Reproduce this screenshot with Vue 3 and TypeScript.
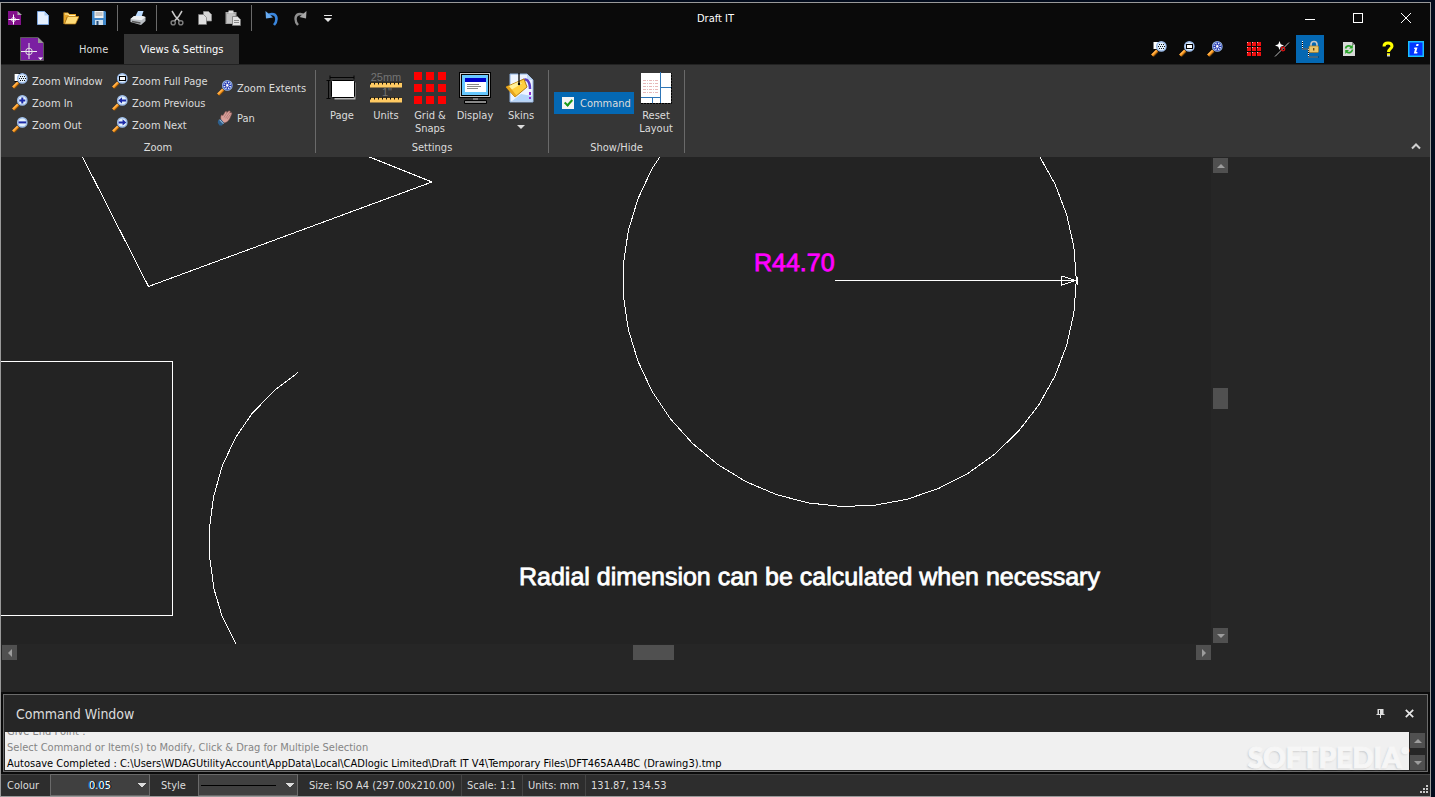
<script setup lang="ts">
import { ref } from 'vue'

interface Tool { icon: string; label: string }
interface BigTool { icon: string; lines: string[]; menu?: boolean }

const quickAccess: Tool[][] = [
  [
    { icon: 'app', label: 'Draft IT' },
    { icon: 'new', label: 'New' },
    { icon: 'open', label: 'Open' },
    { icon: 'save', label: 'Save' },
  ],
  [{ icon: 'print', label: 'Print' }],
  [
    { icon: 'cut', label: 'Cut' },
    { icon: 'copy', label: 'Copy' },
    { icon: 'paste', label: 'Paste' },
  ],
  [
    { icon: 'undo', label: 'Undo' },
    { icon: 'redo', label: 'Redo' },
    { icon: 'more', label: 'Customise' },
  ],
]

const zoomColumns: Tool[][] = [
  [
    { icon: 'zoom-window', label: 'Zoom Window' },
    { icon: 'zoom-in', label: 'Zoom In' },
    { icon: 'zoom-out', label: 'Zoom Out' },
  ],
  [
    { icon: 'zoom-page', label: 'Zoom Full Page' },
    { icon: 'zoom-prev', label: 'Zoom Previous' },
    { icon: 'zoom-next', label: 'Zoom Next' },
  ],
  [
    { icon: 'zoom-extents', label: 'Zoom Extents' },
    { icon: 'pan', label: 'Pan' },
  ],
]

const settings: BigTool[] = [
  { icon: 'page', lines: ['Page'] },
  { icon: 'units', lines: ['Units'] },
  { icon: 'grid', lines: ['Grid &', 'Snaps'] },
  { icon: 'display', lines: ['Display'] },
  { icon: 'skins', lines: ['Skins'], menu: true },
]

const shortcuts: Tool[][] = [
  [
    { icon: 'zoom-window', label: 'Zoom Window' },
    { icon: 'zoom-page', label: 'Zoom Full Page' },
    { icon: 'zoom-extents', label: 'Zoom Extents' },
  ],
  [
    { icon: 'grid-small', label: 'Grid' },
    { icon: 'snap', label: 'Snap' },
    { icon: 'ortho', label: 'Ortho lock' },
  ],
  [{ icon: 'refresh', label: 'Refresh' }],
  [
    { icon: 'help', label: 'Help' },
    { icon: 'info', label: 'About' },
  ],
]

const commandShown = ref(true)

const log = [
  { text: 'Give End Point :', current: false },
  { text: 'Select Command or Item(s) to Modify, Click & Drag for Multiple Selection', current: false },
  {
    text: 'Autosave Completed : C:\\Users\\WDAGUtilityAccount\\AppData\\Local\\CADlogic Limited\\Draft IT V4\\Temporary Files\\DFT465AA4BC (Drawing3).tmp',
    current: true,
  },
]

const facts = ['Size: ISO A4 (297.00x210.00)', 'Scale: 1:1', 'Units: mm', '131.87, 134.53']

// The drawing engine shows circles as short chords.
function chords(cx: number, cy: number, r: number, count: number): string {
  return Array.from({ length: count }, (_, i) => {
    const a = (2 * Math.PI * i) / count
    return `${(cx + r * Math.cos(a)).toFixed(1)},${(cy + r * Math.sin(a)).toFixed(1)}`
  }).join(' ')
}
const circle = chords(848.6, 123, 226.7, 43)
</script>

<template>
  <svg class="defs" aria-hidden="true">
    <defs>
      <g id="lens">
        <path d="M1.5 14.8 6.4 9.9" stroke="#7a4a10" stroke-width="3.4" />
        <path d="M1 14.4 6 9.4" stroke="#ff9a1e" stroke-width="2.4" />
        <path d="M1 13.6 5.4 9.2" stroke="#ffd08a" stroke-width="0.8" />
        <circle cx="10.3" cy="5.4" r="4.6" fill="#e2f0fc" stroke="#9dbce8" stroke-width="1.5" />
      </g>
      <symbol id="i-zoom-window" viewBox="0 0 16 16">
        <path d="M2.5 1v7.5H7V.5h6" fill="#fff" stroke="#000" stroke-width="1" />
        <rect x="2.5" y="1" width="8" height="7" fill="#fff" />
        <use href="#lens" />
        <path d="M8 3.5h6M7 5.5h7M8 7.5h6" stroke="#111" stroke-dasharray="1 1" />
      </symbol>
      <symbol id="i-zoom-in" viewBox="0 0 16 16"><use href="#lens" /><path d="M7.3 5.4h6M10.3 2.4v6" stroke="#1c2aa8" stroke-width="2" /></symbol>
      <symbol id="i-zoom-out" viewBox="0 0 16 16"><use href="#lens" /><path d="M6.500 5.400h7.600" stroke="#1c2aa8" stroke-width="2" /></symbol>
      <symbol id="i-zoom-page" viewBox="0 0 16 16"><use href="#lens" /><rect x="7.500" y="3.500" width="6" height="4" fill="#fff" stroke="#000" /></symbol>
      <symbol id="i-zoom-prev" viewBox="0 0 16 16"><use href="#lens" /><path d="M6.300 5.400 10 2.200v2.200h4v2h-4v2.200z" fill="#1c2aa8" /></symbol>
      <symbol id="i-zoom-next" viewBox="0 0 16 16"><use href="#lens" /><path d="M14.300 5.400 10.600 2.200v2.200h-4v2h4v2.200z" fill="#1c2aa8" /></symbol>
      <symbol id="i-zoom-extents" viewBox="0 0 16 16">
        <use href="#lens" />
        <path d="M7.500 2.700 13.100 8.100M13.100 2.700 7.500 8.100M10.300 1v8.800M6 5.400h8.600" stroke="#2636b0" stroke-width="1.300" />
        <circle cx="10.300" cy="5.400" r="1.300" fill="#fff" />
        <circle cx="10.300" cy="5.400" r="4.300" fill="none" stroke="#4a5fc4" stroke-width=".8" />
      </symbol>
      <symbol id="i-pan" viewBox="0 0 16 16">
        <path d="M4 9.500C3.500 7 4 5 5 4.800l.8 1L8.500 1.500l1.500.2-.3 1L12 .8l1.300.5-.6 1.700 1.600-.4.5 1.200-2.200 5C11.500 11 9 13 6.500 13z" fill="#d9a09a" stroke="#8c5954" stroke-width=".5" />
        <path d="M7 7.500 10 2.500M8.600 8.300l3.800-5.600M10 9l3.600-4.800" stroke="#a06a66" stroke-width=".6" />
        <path d="M1 10.500 3.500 9 7 12.800 5 15.500H2.500L.8 13z" fill="#2d5f8c" /><path d="M2.500 9.700 6.400 13.800" stroke="#b9d0e4" />
      </symbol>
      <symbol id="i-app" viewBox="0 0 16 16">
        <path d="M1 1h9l4 4v10H1z" fill="#82108a" /><path d="M10.500 1v4H15z" fill="#aaa" />
        <path d="M1.500 9.500h11M6.500 4.500v10" stroke="#fff" /><circle cx="6.500" cy="9.500" r="2" fill="none" stroke="#fff" stroke-width=".8" />
      </symbol>
      <symbol id="i-app-big" viewBox="0 0 24 24">
        <path d="M.5.5h17.500l5.500 5.500v17.500H.5z" fill="#7b1fa2" stroke="#5b5b5b" /><path d="M18 .5V6h5.500z" fill="#999" />
        <path d="M1 14.500h16M9 6v16" stroke="#eee" /><circle cx="9" cy="14.500" r="3.300" fill="none" stroke="#ddd" />
        <path d="M18 20.500h5l-2.500 2.500z" fill="#fff" />
      </symbol>
      <symbol id="i-new" viewBox="0 0 16 16"><path d="M2.500 1.500h7l4 4v9h-11z" fill="#e6f1ff" stroke="#7ba4dc" /><path d="M9.500 1.500v4h4z" fill="#a9cbf3" /></symbol>
      <symbol id="i-open" viewBox="0 0 16 16"><path d="M.5 14V2.500H5L6.500 4H13v3H4L1.500 14z" fill="#e5a52a" /><path d="M1.500 14 4.500 6.500H16L12.500 14z" fill="#ffdc78" stroke="#bd7d12" stroke-width=".7" /><path d="M2 4h3l1 1.500h6" stroke="#fff1b5" fill="none" /></symbol>
      <symbol id="i-save" viewBox="0 0 16 16"><path d="M1 1h13l1 1v13H1z" fill="#3f86c8" /><path d="M3.500 1h9v7h-9z" fill="#f2f2f2" /><path d="M4.500 3h7M4.500 5h7" stroke="#9a9a9a" /><path d="M4 10h8v5H4z" fill="#cfe0ee" /><path d="M5.500 11h2v4h-2z" fill="#244b74" /></symbol>
      <symbol id="i-print" viewBox="0 0 16 16"><path d="M5 7 8 1h5.500L11.500 7z" fill="#bcdcff" /><path d="M.5 9 4 6h8.500l3 1v4l-4.500 4L.5 12z" fill="#b9bec3" /><path d="M.5 9 4 6h8.500l3 1-4 3.200z" fill="#eceff1" /><path d="M2 11.500 10.500 13" stroke="#555" stroke-width="1.300" /></symbol>
      <symbol id="i-cut" viewBox="0 0 16 16"><path d="M3 1l3 5 4.500 5M13 1l-3 5-4.500 5" fill="none" stroke="#c9c9c9" stroke-width="1.500" /><circle cx="4.200" cy="12.800" r="2.100" fill="none" stroke="#808080" stroke-width="1.400" /><circle cx="11.800" cy="12.800" r="2.100" fill="none" stroke="#808080" stroke-width="1.400" /></symbol>
      <symbol id="i-copy" viewBox="0 0 16 16"><path d="M6.500 1.500h5l3 3V11h-8z" fill="#d5d5d5" stroke="#8f8f8f" stroke-width=".7" /><path d="M1.500 4.500h5l3 3v7h-8z" fill="#e0e0e0" stroke="#777" stroke-width=".7" /></symbol>
      <symbol id="i-paste" viewBox="0 0 16 16"><path d="M.5 2h11v12H.5z" fill="#a5a5a5" /><path d="M2 4h8v9H2z" fill="#c4c4c4" /><path d="M3.500.500h5v3h-5z" fill="#dedede" /><path d="M7.500 6.500h5l3 3v6h-8z" fill="#e2e2e2" stroke="#777" stroke-width=".8" /><path d="M9 10.500h5M9 12.500h5" stroke="#888" /></symbol>
      <symbol id="i-undo" viewBox="0 0 16 16"><path d="M3 5.500C8 2.500 12.500 4 12.500 9c0 2.500-1 4.300-2.500 6" fill="none" stroke="#3a86dd" stroke-width="2.600" /><path d="M1.500 1 2 8.500 9 7.500z" fill="#67abf2" /></symbol>
      <symbol id="i-redo" viewBox="0 0 16 16"><path d="M13 5.500C8 2.500 3.500 4 3.500 9c0 2.500 1 4.300 2.500 6" fill="none" stroke="#8f8f8f" stroke-width="2.400" /><path d="M14.500 1 14 8.500 7.500 7z" fill="#a8a8a8" /></symbol>
      <symbol id="i-more" viewBox="0 0 16 16"><path d="M4 5.500h8" stroke="#e5e5e5" /><path d="M4 8h8l-4 4z" fill="#e5e5e5" /></symbol>
      <symbol id="i-page" viewBox="0 0 32 32">
        <path d="M4 5.500h24M4 3.500v4M28 3.500v4M2.500 8v18M.5 8.500h4M.5 26.500h4" stroke="#050505" />
        <rect x="8" y="10" width="22" height="18" fill="#b8b8b8" stroke="#333" />
        <rect x="5.500" y="8.500" width="23" height="17" rx="1" fill="#fff" stroke="#000" />
      </symbol>
      <symbol id="i-units" viewBox="0 0 32 32">
        <text x="16" y="9" text-anchor="middle" font-family="Liberation Sans, sans-serif" font-size="11" fill="#747474">25mm</text>
        <text x="17" y="24" text-anchor="middle" font-family="Liberation Sans, sans-serif" font-size="11" fill="#747474">1"</text>
        <path d="M0 10.500h32v5H0zM0 25.500h32v5H0z" fill="#ffca62" />
        <path d="M0 11.500h32M0 26.500h32" stroke="#111" stroke-width="2" stroke-dasharray="1 3" />
        <path d="M0 10.500h32M0 25.500h32" stroke="#111" stroke-width=".7" />
      </symbol>
      <symbol id="i-grid" viewBox="0 0 32 32"><path d="M0 0h8v8H0zM12 0h8v8h-8zM24 0h8v8h-8zM0 12h8v8H0zM12 12h8v8h-8zM24 12h8v8h-8zM0 24h8v8H0zM12 24h8v8h-8zM24 24h8v8h-8z" fill="#fe0000" /></symbol>
      <symbol id="i-display" viewBox="0 0 32 32">
        <rect x=".5" y=".5" width="31" height="25" fill="#c4c4c4" stroke="#000" /><rect x="2.500" y="2.500" width="27" height="21" fill="#66c8ff" stroke="#000" />
        <rect x="6" y="6" width="21" height="14" fill="#fff" /><path d="M6 6h21v4H6z" fill="#0000c8" /><path d="M8 12.500h12M8 14.500h14M8 16.500h11" stroke="#888" />
        <path d="M14 26h5v3h-5z" fill="#777" /><path d="M5.500 28.500h22v3h-22z" fill="#888" stroke="#000" />
      </symbol>
      <symbol id="i-skins" viewBox="0 0 32 32">
        <path d="M5 2h17l6 6v22H5z" fill="#edf4ff" stroke="#8db0df" /><path d="M22 2v6h6z" fill="#c2d8f5" />
        <path d="M7 29l9-7 11 2v5z" fill="#b5d6fb" />
        <path d="M17 9C22 5 25 10 25 17" fill="none" stroke="#5d3fc4" stroke-width="2.500" /><path d="M25 20v3M25 25v2" stroke="#8a2ad0" stroke-width="2" />
        <path d="M1 15 19 7l3 8-12 10z" fill="#ffcf3f" stroke="#b77e0d" /><path d="M2 15 14 9.500l3 2L6 18z" fill="#fff09a" /><path d="M1 15 10 25l1.500-1.500L4 14z" fill="#e8a51c" />
        <path d="M14 1v11" stroke="#000" stroke-width="1.300" /><circle cx="14" cy="12" r="1.200" />
      </symbol>
      <symbol id="i-reset" viewBox="0 0 32 32">
        <rect x="1" y="1" width="30" height="30" fill="#fff" /><path d="M1 31.500h30.500V1" fill="none" stroke="#000" stroke-dasharray="2 1" />
        <path d="M20.500 0v31M21 15.500h10M1 25.500h19M12.500 26v5" stroke="#2e75b6" />
        <path d="M3 8.500h15M3 11.500h15M3 14.500h15M3 17.500h15M3 20.500h15" stroke="#e7b9b9" stroke-dasharray="3 1 1 1" />
      </symbol>
      <symbol id="i-grid-small" viewBox="0 0 16 16"><path d="M1 1h4v4H1zM6 1h4v4H6zM11 1h4v4h-4zM1 6h4v4H1zM6 6h4v4H6zM11 6h4v4h-4zM1 11h4v4H1zM6 11h4v4H6zM11 11h4v4h-4z" fill="#f01010" /><path d="M1 1.500h14M1 6.500h14M1 11.500h14" stroke="#ffb4b4" stroke-dasharray="1 4" /></symbol>
      <symbol id="i-snap" viewBox="0 0 16 16"><path d="M1 15.500 15 1.500" stroke="#bbb" /><path d="M5.500 0l1.200 3.300L10 4.500 6.700 5.700 5.500 9 4.300 5.700 1 4.500l3.300-1.200z" fill="#fff" /><circle cx="9" cy="8" r="1.800" fill="none" stroke="#e01010" stroke-width="1.200" /></symbol>
      <symbol id="i-ortho" viewBox="0 0 20 20"><path d="M2.500 2v8h6v8h10" fill="none" stroke="#000" /><path d="M2.500 2v8h6v8h10" fill="none" stroke="#fff" stroke-dasharray="1 1" /><path d="M11 8V5.500a3 3 0 0 1 6 0V8" fill="none" stroke="#c8c8c8" stroke-width="1.600" /><rect x="9" y="7" width="9.500" height="6.500" rx="1" fill="#eac56c" stroke="#a87a25" stroke-width=".7" /><path d="M13.700 9v2.500" stroke="#6b4a10" stroke-width="1.400" /></symbol>
      <symbol id="i-refresh" viewBox="0 0 16 16"><path d="M2 1h9l3 3v11H2z" fill="#d9d9d9" /><path d="M11 1v3h3z" fill="#888" /><path d="M4.500 7.500C5 4.500 9 4 10.500 6M11.500 8.500C11 12 7 12.500 5.500 10.500" fill="none" stroke="#27a327" stroke-width="1.700" /><path d="M11.800 3.500v4H8zM4.200 13V9H8z" fill="#27a327" /></symbol>
      <symbol id="i-help" viewBox="0 0 16 16"><path d="M4 5.500C4 2.500 6 2 8 2c2.500 0 4 1.200 4 3.200C12 7.500 8.500 8 8.500 11" fill="none" stroke="#ff0" stroke-width="3" /><path d="M7 12.500h3V15.500H7z" fill="#ccc" /><path d="M7 12.500h3v1.500H7z" fill="#ff0" /></symbol>
      <symbol id="i-info" viewBox="0 0 16 16"><rect x=".75" y=".75" width="14.500" height="14.500" fill="#0436ff" stroke="#18c0ff" stroke-width="1.500" /><path d="M8.500 3h2.200L10.200 5H8zM6.500 6.500h3L8.200 11h1.300l-.3 1.500H5.800L7 8H6z" fill="#fff" /></symbol>
      <symbol id="i-pin" viewBox="0 0 8 9"><path d="M1 0h6v5h1v1H4.500v3h-1V6H0V5h1z" fill="#ddd" /><path d="M3 1v4" stroke="#262626" /></symbol>
      <symbol id="i-x" viewBox="0 0 9 9"><path d="M.8.8l7.400 7.400M8.200.8.8 8.200" stroke="#e8e8e8" stroke-width="1.700" /></symbol>
    </defs>
  </svg>

  <div class="desktop">
    <main class="window">
      <header class="titlebar">
        <nav class="quick" aria-label="Quick access">
          <div v-for="(set, i) in quickAccess" :key="i" class="quick-set">
            <button v-for="t in set" :key="t.icon" class="flat quick-btn" :aria-label="t.label">
              <svg class="ic16"><use :href="'#i-' + t.icon" /></svg>
            </button>
          </div>
        </nav>
        <h1 class="title">Draft IT</h1>
        <div class="win-buttons">
          <button class="flat win-btn" aria-label="Minimise"><svg class="ic10"><path d="M0 6.500h10" stroke="#fff" /></svg></button>
          <button class="flat win-btn" aria-label="Maximise"><svg class="ic10"><rect x=".5" y=".5" width="9" height="9" fill="none" stroke="#fff" /></svg></button>
          <button class="flat win-btn" aria-label="Close"><svg class="ic10"><path d="M0 0l10 10M10 0 0 10" stroke="#fff" /></svg></button>
        </div>
      </header>

      <div class="tabrow">
        <button class="flat app-btn" aria-label="Application menu"><svg class="ic24"><use href="#i-app-big" /></svg></button>
        <button class="flat tab">Home</button>
        <button class="flat tab active">Views &amp; Settings</button>
        <div class="shortcuts">
          <div v-for="(set, i) in shortcuts" :key="i" class="short-set">
            <button v-for="t in set" :key="t.icon" class="flat short-btn" :class="{ on: t.icon === 'ortho' }" :aria-label="t.label">
              <svg :class="t.icon === 'ortho' ? 'ic20' : 'ic16'"><use :href="'#i-' + t.icon" /></svg>
            </button>
          </div>
        </div>
      </div>

      <section class="ribbon">
        <div class="group zoom">
          <div class="group-body">
            <div v-for="(col, i) in zoomColumns" :key="i" class="zoom-col">
              <button v-for="t in col" :key="t.label" class="flat small-btn">
                <svg class="ic16"><use :href="'#i-' + t.icon" /></svg>{{ t.label }}
              </button>
            </div>
          </div>
          <h2 class="caption">Zoom</h2>
        </div>
        <div class="group">
          <div class="group-body settings">
            <button v-for="t in settings" :key="t.icon" class="flat big-btn">
              <svg class="ic32"><use :href="'#i-' + t.icon" /></svg>
              <span v-for="l in t.lines" :key="l">{{ l }}</span>
              <i v-if="t.menu" class="caret"></i>
            </button>
          </div>
          <h2 class="caption">Settings</h2>
        </div>
        <div class="group">
          <div class="group-body showhide">
            <label class="toggle"><input v-model="commandShown" type="checkbox" />Command</label>
            <button class="flat big-btn reset">
              <svg class="ic32"><use href="#i-reset" /></svg>
              <span>Reset</span><span>Layout</span>
            </button>
          </div>
          <h2 class="caption">Show/Hide</h2>
        </div>
        <button class="flat collapse" aria-label="Collapse ribbon">
          <svg class="ic10"><path d="M1 7.500 5 3.500l4 4" fill="none" stroke="#d0d0d0" stroke-width="2" /></svg>
        </button>
      </section>

      <section class="workspace">
        <svg class="drawing" role="img" aria-label="Drawing3">
          <g fill="none" stroke="#fff" shape-rendering="crispEdges">
            <path d="M80.500-2 147.500 129.500 431 25 366-1" />
            <path d="M0 204.500H171.500V458.500H0" />
            <path d="M297 215.500 274 233 251 256.500 235 280 221.500 308 212.500 340 208.500 371V399L213 432 221 459 235 487" />
            <polygon :points="circle" />
            <path d="M834 123.500H1076M1060.500 119V128L1075 123.500 1060.500 119" />
            <path d="M1076.500 120V128" />
          </g>
          <g class="cad-text">
            <text x="753" y="114" fill="#f0f" stroke="#f0f">R44.70</text>
            <text x="518" y="428" fill="#fff" stroke="#fff">Radial dimension can be calculated when necessary</text>
          </g>
        </svg>
        <div class="bar vbar">
          <button class="step up" aria-label="Scroll up"></button>
          <i class="v-before"></i><i class="thumb v"></i><i class="v-after"></i>
          <button class="step down" aria-label="Scroll down"></button>
        </div>
        <div class="bar hbar">
          <button class="step left" aria-label="Scroll left"></button>
          <i class="h-before"></i><i class="thumb h"></i><i class="h-after"></i>
          <button class="step right" aria-label="Scroll right"></button>
        </div>
      </section>

      <section class="dock">
        <div class="panel">
          <header class="panel-head">
            <h2 class="panel-title">Command Window</h2>
            <button class="flat panel-btn" aria-label="Pin"><svg class="ic9"><use href="#i-pin" /></svg></button>
            <button class="flat panel-btn" aria-label="Close panel"><svg class="ic9"><use href="#i-x" /></svg></button>
          </header>
          <div class="panel-body">
            <div class="log">
              <p v-for="l in log" :key="l.text" :class="{ current: l.current }">{{ l.text }}</p>
            </div>
            <div class="bar log-bar">
              <button class="step up" aria-label="Scroll log up"></button>
              <button class="step down" aria-label="Scroll log down"></button>
            </div>
            <span class="mark">SOFTPEDIA<sup>®</sup></span>
          </div>
        </div>
      </section>

      <footer class="status">
        <label class="status-label" for="colour">Colour</label>
        <select id="colour" class="colour"><option>0.05</option></select>
        <label class="status-label style-label" for="style">Style</label>
        <select id="style" class="line-style"><option label=" "></option></select>
        <div class="facts"><span v-for="f in facts" :key="f">{{ f }}</span></div>
        <svg class="grip" aria-hidden="true"><path d="M7 1h2v2H7zM4 4h2v2H4zM7 4h2v2H7zM1 7h2v2H1zM4 7h2v2H4zM7 7h2v2H7z" fill="#c8c8c8" /></svg>
      </footer>
    </main>
  </div>
</template>

<style>
html,
body {
  margin: 0;
  background: #020b1c;
}
</style>

<style scoped>
.defs {
  position: absolute;
  width: 0;
  height: 0;
}
.desktop {
  box-sizing: border-box;
  height: 100vh;
  min-height: 560px;
  padding: 2px 4px 0 0;
  font: 11px/13px "DejaVu Sans Condensed", Tahoma, Roboto, sans-serif;
  color: #dcdcdc;
}
.window {
  box-sizing: border-box;
  height: 100%;
  display: flex;
  flex-direction: column;
  border: 1px solid #999;
  background: #262626;
}
h1,
h2,
p {
  margin: 0;
  font: inherit;
}
svg {
  display: block;
  flex: none;
}
.ic9 { width: 9px; height: 9px; }
.ic10 { width: 10px; height: 10px; }
.ic16 { width: 16px; height: 16px; }
.ic20 { width: 20px; height: 20px; }
.ic24 { width: 24px; height: 24px; }
.ic32 { width: 32px; height: 32px; }
.flat {
  display: flex;
  align-items: center;
  justify-content: center;
  margin: 0;
  padding: 0;
  border: 0;
  background: none;
  color: inherit;
  font: inherit;
}
.titlebar {
  display: grid;
  grid-template-columns: 1fr auto 1fr;
  align-items: center;
  box-sizing: border-box;
  height: 31px;
  padding-bottom: 1px;
  background: #0a0a0a;
}
.quick,
.quick-set {
  display: flex;
  align-items: center;
}
.quick-set {
  height: 26px;
  padding-right: 4px;
}
.quick-set + .quick-set {
  border-left: 1px solid #6a6a6a;
  padding-left: 6px;
}
.quick-btn {
  width: 28px;
  height: 26px;
}
.title {
  color: #fff;
  text-align: center;
}
.win-buttons {
  display: flex;
  justify-content: flex-end;
}
.win-btn {
  width: 48px;
  height: 30px;
}
.tabrow {
  display: flex;
  height: 30px;
  background: #0a0a0a;
}
.app-btn {
  width: 62px;
}
.tab {
  padding: 0 16px;
}
.tab.active {
  background: #363636;
  color: #fff;
}
.shortcuts {
  display: flex;
  flex: 1;
  justify-content: flex-end;
  align-items: center;
  gap: 11px;
}
.short-set {
  display: flex;
}
.short-btn {
  width: 28px;
  height: 28px;
}
.short-btn.on {
  background: #0468b3;
}
.ribbon {
  display: flex;
  box-sizing: border-box;
  height: 93px;
  padding-top: 5px;
  border-top: 1px solid #222;
  background: #363636;
}
.group {
  display: flex;
  flex-direction: column;
  margin-bottom: 4px;
  border-right: 1px solid #6a6a6a;
}
.group-body {
  display: flex;
  flex: 1;
}
.caption {
  line-height: 11px;
  text-align: center;
}
.zoom-col {
  display: flex;
  flex-direction: column;
  width: 100px;
}
.zoom-col:first-child {
  padding-left: 11px;
}
.zoom-col:last-child {
  width: 98px;
  margin-left: 5px;
  padding-top: 3px;
}
.small-btn {
  justify-content: flex-start;
  gap: 4px;
  height: 22px;
  white-space: nowrap;
}
.zoom-col:last-child .small-btn {
  height: 30px;
}
.settings {
  padding: 0 4px;
}
.big-btn {
  flex-direction: column;
  justify-content: flex-start;
  width: 44px;
  padding-top: 2px;
}
.settings .big-btn:nth-child(n + 4) {
  width: 46px;
}
.big-btn .ic32 {
  margin-bottom: 5px;
}
.caret {
  margin-top: 3px;
  border: 4px solid transparent;
  border-top-color: #dcdcdc;
  border-bottom: 0;
}
.showhide {
  padding: 0 6px 0 5px;
}
.toggle {
  display: flex;
  align-items: center;
  box-sizing: border-box;
  width: 80px;
  height: 22px;
  margin-top: 22px;
  padding-left: 8px;
  gap: 6px;
  background: #0468b3;
}
.toggle input {
  appearance: none;
  width: 12px;
  height: 12px;
  margin: 0;
  background: #f4f4f4;
  display: grid;
  place-items: center;
}
.toggle input:checked::before {
  content: "";
  width: 3px;
  height: 6px;
  margin-bottom: 2px;
  border: solid #1a9a1a;
  border-width: 0 2px 2px 0;
  transform: rotate(42deg);
}
.collapse {
  align-self: flex-end;
  margin-left: auto;
  width: 28px;
  height: 22px;
}
.workspace {
  flex: 1;
  min-height: 0;
  display: grid;
  grid-template: minmax(0, 1fr) 15px / minmax(0, 1fr) 15px;
  gap: 1px 2px;
  padding: 0 202px 32px 0;
}
.drawing {
  width: 100%;
  height: 100%;
  overflow: hidden;
  background: #232323;
}
.cad-text {
  font: 25px "Liberation Sans", Arial, sans-serif;
  text-rendering: geometricPrecision;
  stroke-width: 0.8px;
}
.bar {
  display: flex;
}
.vbar {
  flex-direction: column;
  padding: 1px 0;
}
.hbar {
  padding-left: 1px;
}
.v-before { flex: 215; }
.v-after { flex: 219; }
.h-before { flex: 616; }
.h-after { flex: 522; }
.thumb {
  background: #505050;
}
.thumb.v {
  height: 21px;
}
.thumb.h {
  width: 41px;
}
.step {
  display: grid;
  place-items: center;
  width: 15px;
  height: 15px;
  padding: 0;
  border: 0;
  background: #505050;
}
.step::before {
  content: "";
  border: 4px solid transparent;
}
.step.up::before { border-bottom-color: #9d9d9d; border-top: 0; }
.step.down::before { border-top-color: #9d9d9d; border-bottom: 0; }
.step.left::before { border-right-color: #9d9d9d; border-left: 0; }
.step.right::before { border-left-color: #9d9d9d; border-right: 0; }
.dock {
  padding: 2px;
  background: #0a0a0a;
}
.panel {
  border: 1px solid #6b6b6b;
  background: #262626;
}
.panel-head {
  display: flex;
  align-items: center;
  height: 37px;
  padding-right: 3px;
}
.panel-title {
  flex: 1;
  padding-left: 12px;
  font-size: 14px;
  line-height: 20px;
}
.panel-btn {
  width: 29px;
  height: 24px;
}
.panel-body {
  position: relative;
  display: flex;
  gap: 1px;
  padding: 0 2px 1px 1px;
}
.log {
  flex: 1;
  display: flex;
  flex-direction: column;
  justify-content: flex-end;
  height: 38px;
  overflow: hidden;
  background: #f0f0f0;
  color: #858585;
}
.log p {
  flex: none;
  padding-left: 2px;
  line-height: 16px;
  white-space: nowrap;
}
.log p.current {
  margin-bottom: -2px;
  color: #000;
}
.mark {
  position: absolute;
  right: 18px;
  bottom: -2px;
  font: 900 28px/32px Lato, sans-serif;
  color: #f6f6f6;
  -webkit-text-stroke: 1px #f6f6f6;
  text-shadow: -1px 1px 2px #c4c4c4;
  pointer-events: none;
}
.mark sup {
  font-size: 9px;
  line-height: 0;
  vertical-align: 14px;
}
.log-bar {
  flex-direction: column;
  justify-content: space-between;
  padding-top: 1px;
}
.status {
  display: flex;
  align-items: center;
  box-sizing: border-box;
  height: 22px;
  border-top: 1px solid #444;
  background: #2d2d2d;
}
.status-label {
  box-sizing: border-box;
  width: 49px;
  padding-left: 6px;
}
.style-label {
  width: 48px;
  padding-left: 11px;
}
.status select {
  appearance: none;
  box-sizing: border-box;
  width: 100px;
  height: 22px;
  margin: -1px 0 0;
  padding: 0 6px;
  border: 1px solid #6a6a6a;
  border-radius: 0;
  background: linear-gradient(to bottom right, #dcdcdc 50%, transparent 51%) right 3px center / 4px 4px no-repeat,
    linear-gradient(to bottom left, #dcdcdc 50%, transparent 51%) right 7px center / 4px 4px no-repeat, #404040;
  color: #fff;
  font: inherit;
  text-align: center;
  text-align-last: center;
}
.status .colour {
  text-shadow: 1px 0 #000, -1px 0 #07c;
}
.status .line-style {
  background: linear-gradient(to bottom right, #dcdcdc 50%, transparent 51%) right 3px center / 4px 4px no-repeat,
    linear-gradient(to bottom left, #dcdcdc 50%, transparent 51%) right 7px center / 4px 4px no-repeat,
    linear-gradient(#000, #000) 2px center / 75px 1px no-repeat, #404040;
}
.facts {
  display: flex;
  flex: 1;
  align-items: center;
  align-self: stretch;
  padding-left: 5px;
}
.facts span {
  display: flex;
  align-items: center;
  height: 100%;
  padding: 0 6px;
}
.facts span + span {
  border-left: 1px solid #444;
  padding-left: 5px;
}
.grip {
  align-self: flex-end;
  width: 10px;
  height: 10px;
  margin: 0 1px 2px 0;
}
</style>
